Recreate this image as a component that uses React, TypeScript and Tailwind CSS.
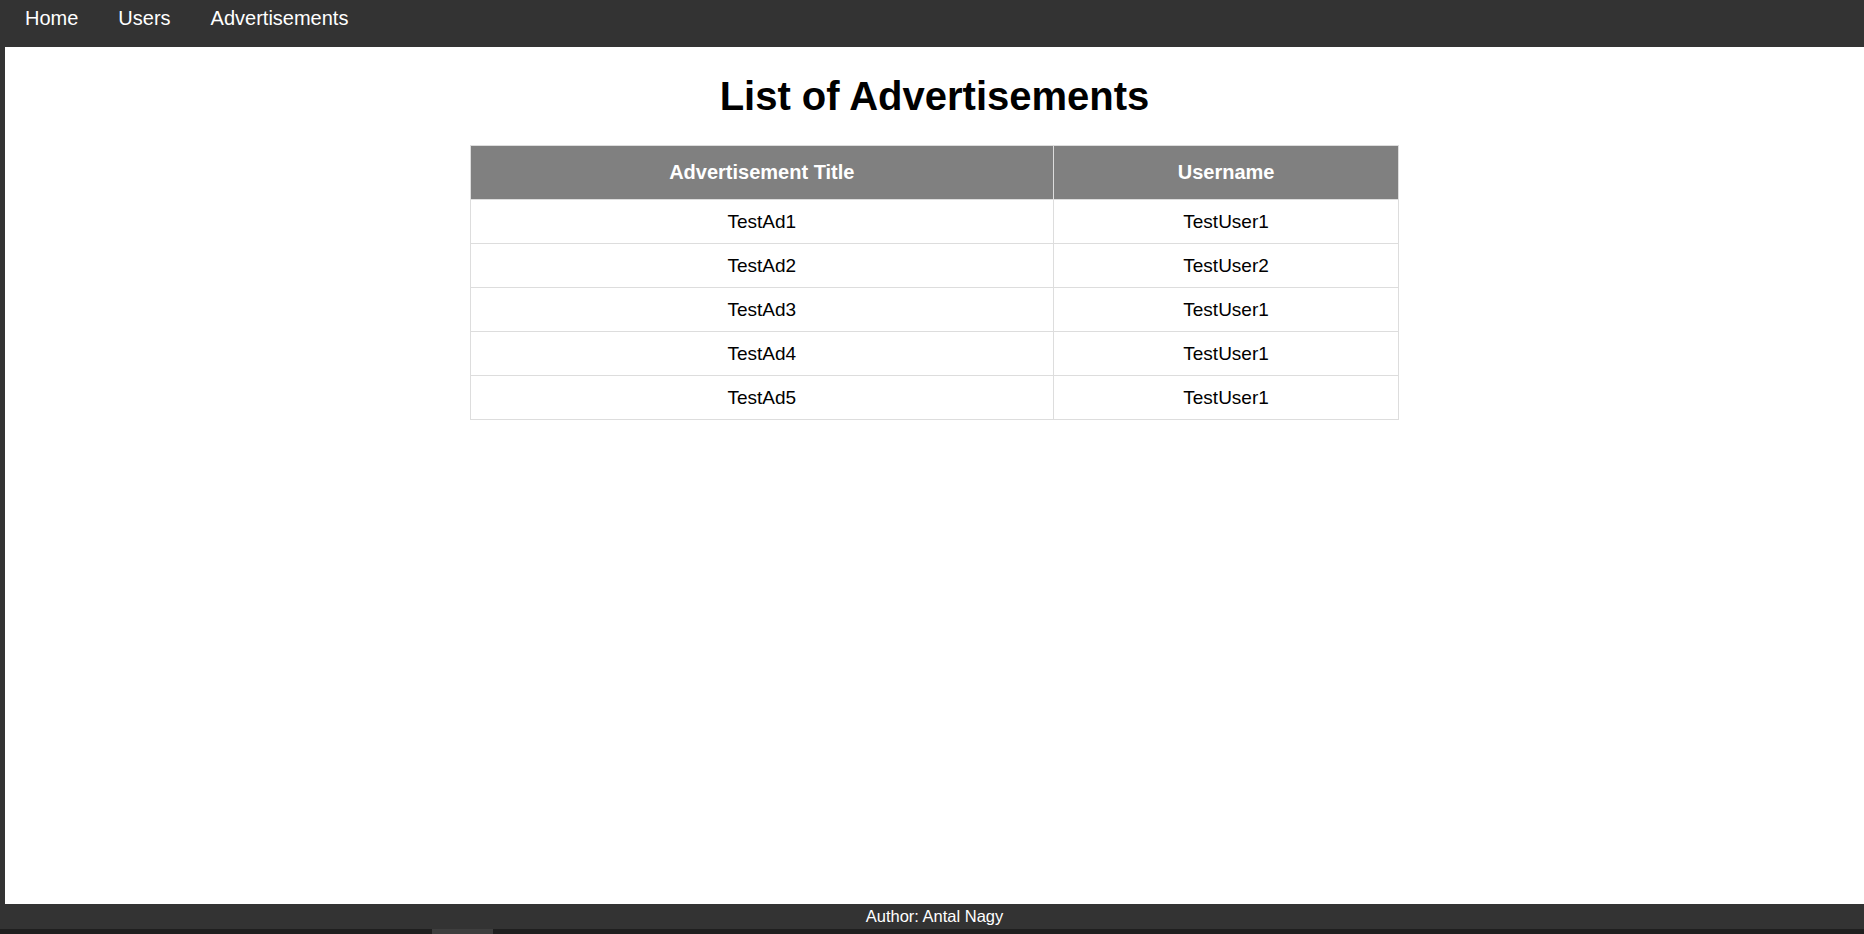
const ads = [
  { title: "TestAd1", user: "TestUser1" },
  { title: "TestAd2", user: "TestUser2" },
  { title: "TestAd3", user: "TestUser1" },
  { title: "TestAd4", user: "TestUser1" },
  { title: "TestAd5", user: "TestUser1" },
];

const links = ["Home", "Users", "Advertisements"];

export default function App() {
  return (
    <div
      className="flex h-[934px] flex-col overflow-hidden bg-[#333333] text-black"
      style={{ fontFamily: '"Liberation Sans", Arial, sans-serif' }}
    >
      <nav className="flex h-[47px] shrink-0 bg-[#333333] pl-[5px]">
        {links.map((l) => (
          <a key={l} href="#" className="px-[20px] pt-[7px] text-[20px] leading-[23px] text-white">
            {l}
          </a>
        ))}
      </nav>

      <div className="flex min-h-0 flex-1">
        <div className="w-[5px] shrink-0 bg-[#333333]" />
        <main className="flex-1 bg-white">
          <h1 className="mt-[26px] mb-[26px] text-center text-[40px] font-bold leading-[46px]">List of Advertisements</h1>
          <table className="mx-auto w-1/2 border-collapse border border-[#dddddd]">
            <thead>
              <tr className="bg-[#808080] text-white">
                <th className="w-[62.8%] border border-[#dddddd] py-[15px] text-[20px] leading-[23px] font-bold">
                  Advertisement Title
                </th>
                <th className="border border-[#dddddd] py-[15px] text-[20px] leading-[23px] font-bold">Username</th>
              </tr>
            </thead>
            <tbody>
              {ads.map((a) => (
                <tr key={a.title}>
                  <td className="border border-[#dddddd] py-[11px] text-center text-[19px] leading-[21px]">
                    {a.title}
                  </td>
                  <td className="border border-[#dddddd] py-[11px] text-center text-[19px] leading-[21px]">
                    {a.user}
                  </td>
                </tr>
              ))}
            </tbody>
          </table>
        </main>
      </div>

      <footer className="flex h-[25px] shrink-0 items-center justify-center bg-[#333333] pl-[5px] text-[16.5px] text-white">
        Author: Antal Nagy
      </footer>
      <div className="flex h-[5px] shrink-0 bg-[#1f1f1f] pl-[432px]">
        <div className="h-full w-[61px] bg-[#3e3e3e]" />
      </div>
    </div>
  );
}
